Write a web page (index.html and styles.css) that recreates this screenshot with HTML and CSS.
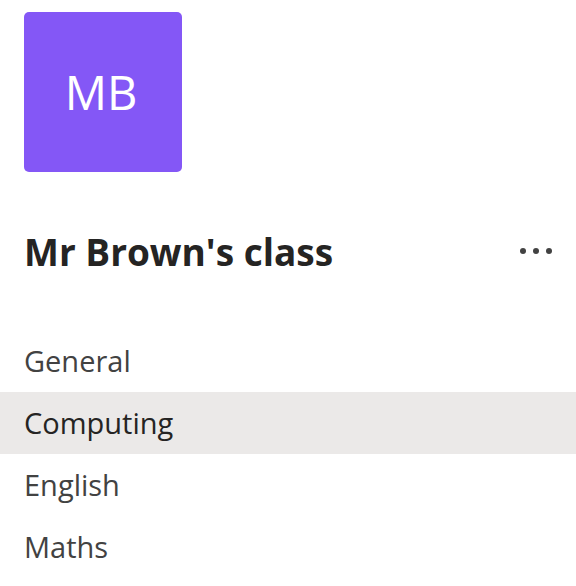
FILE: index.html
```html
<!DOCTYPE html>
<html lang="en">
<head>
  <meta charset="UTF-8">
  <title>Mr Brown's class</title>
  <link rel="stylesheet" href="styles.css">
</head>
<body>
  <div class="team-avatar">MB</div>

  <div class="team-header">
    <h1>Mr Brown's class</h1>
    <span class="more" aria-label="More options"><i></i><i></i><i></i></span>
  </div>

  <ul class="channels">
    <li>General</li>
    <li class="active">Computing</li>
    <li>English</li>
    <li>Maths</li>
  </ul>
</body>
</html>
```

FILE: styles.css
```css
body {
  margin: 0;
  padding-top: 12px;
  font-family: "Open Sans", "Noto Sans", sans-serif;
  background-color: #fff;
  color: #424242;
}
.team-avatar {
  margin-left: 24px;
  width: 158px;
  height: 160px;
  padding-right: 4px;
  box-sizing: border-box;
  border-radius: 5px;
  background-color: #8457f6;
  color: #fff;
  font-size: 47px;
  display: flex;
  align-items: center;
  justify-content: center;
}
.team-header {
  display: flex;
  align-items: center;
  justify-content: space-between;
  margin-top: 57px;
  padding: 0 24px;
  height: 44px;
}
.team-header h1 {
  margin: 0;
  font-size: 37px;
  font-weight: 700;
  color: #252423;
}
.more {
  display: flex;
  gap: 7px;
}
.more i {
  width: 6px;
  height: 6px;
  border-radius: 50%;
  background-color: #424242;
}
.channels {
  list-style: none;
  margin: 57px 0 0;
  padding: 0;
}
.channels li {
  height: 62px;
  line-height: 62px;
  padding: 0 24px;
  font-size: 29px;
}
.channels li.active {
  background-color: #ebe9e8;
  color: #252423;
}
```
